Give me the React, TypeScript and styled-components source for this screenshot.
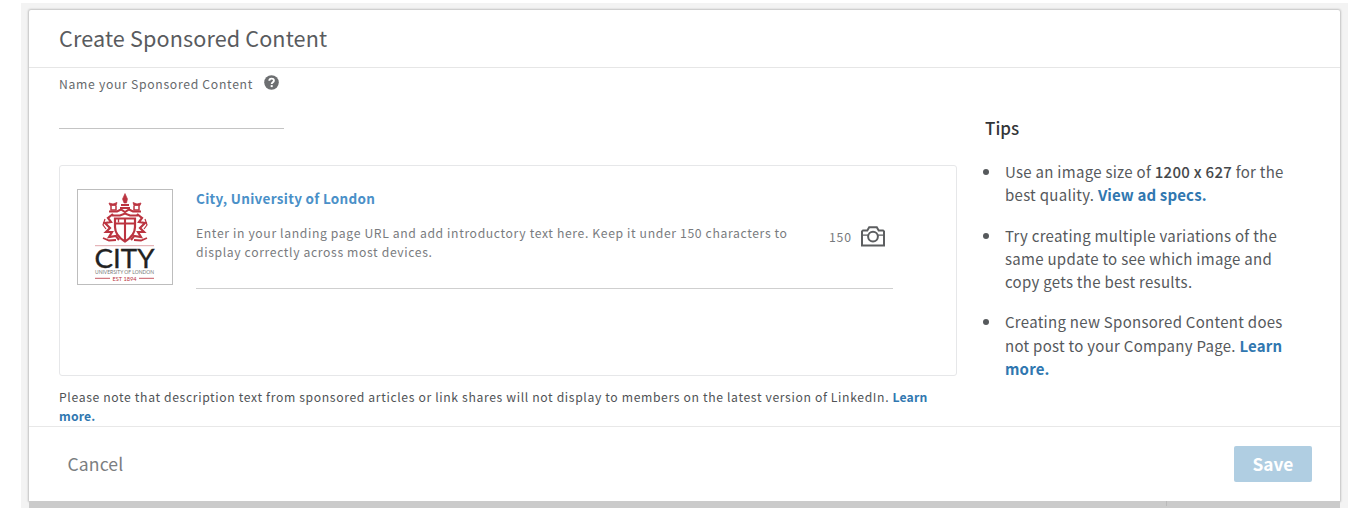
import React from "react";
import styled, { createGlobalStyle } from "styled-components";

const GlobalStyle = createGlobalStyle`
  *, *::before, *::after { box-sizing: border-box; }
  body {
    margin: 0;
    background: #fff;
    font-family: "Noto Sans CJK SC", "Noto Sans", sans-serif;
    color: #5c5f62;
  }
`;

const Backdrop = styled.main`
  width: 1327px;
  height: 505px;
  margin: 3px 0 0 21px;
  padding: 7px 8px 0;
  background: #f3f3f3;
  overflow: hidden;
`;

const Dialog = styled.section`
  display: flex;
  flex-direction: column;
  height: 491px;
  background: #fff;
  border-radius: 2px 2px 0 0;
  box-shadow: 0 0 2px 1px rgba(0, 0, 0, 0.2);
`;

const Header = styled.header`
  height: 58px;
  padding-left: 30px;
  border-bottom: 1px solid #e6e6e6;
`;

const Title = styled.h1`
  margin: 0;
  font-size: 21.6px;
  line-height: 56px;
  font-weight: 400;
  letter-spacing: 0.13px;
  color: #595b5e;
`;

const Body = styled.div`
  display: flex;
  flex: 1;
  min-height: 0;
  padding-left: 30px;
`;

const FormColumn = styled.div`
  width: 898px;
`;

const FieldLabel = styled.label`
  display: flex;
  align-items: center;
  gap: 11px;
  height: 31px;
  font-size: 12.2px;
  letter-spacing: 0.7px;
  color: #66696c;

  svg {
    margin-bottom: 3px;
  }
`;

const NameInput = styled.input`
  display: block;
  width: 225px;
  height: 30px;
  padding: 0;
  border: 0;
  border-bottom: 1px solid #c4c4c4;
  outline: 0;
  background: transparent;
`;

const AdCard = styled.article`
  display: flex;
  align-items: flex-start;
  gap: 23px;
  height: 211px;
  margin-top: 36px;
  padding: 23px 0 0 17px;
  border: 1px solid #e6e7e9;
  border-radius: 3px;
`;

const LogoFrame = styled.div`
  width: 96px;
  height: 96px;
  border: 1px solid #bdbdbd;
`;

const Composer = styled.div`
  width: 697px;
  height: 100px;
  border-bottom: 1px solid #cfcfcf;
`;

const CompanyName = styled.a`
  display: block;
  height: 35px;
  font-size: 13.5px;
  line-height: 18px;
  font-weight: 700;
  letter-spacing: 0.3px;
  color: #4a90c8;
`;

const PromptRow = styled.div`
  display: flex;
`;

const Prompt = styled.p`
  width: 633px;
  margin: 0;
  font-size: 12.2px;
  line-height: 18.67px;
  letter-spacing: 0.63px;
  color: #797b7e;
  white-space: nowrap;
`;

const Counter = styled.span`
  width: 32px;
  padding-top: 4px;
  font-size: 12.2px;
  line-height: 18px;
  letter-spacing: 0.8px;
  color: #76797c;
`;

const CameraSlot = styled.span`
  padding-top: 2px;
  line-height: 0;
`;

const Note = styled.p`
  margin: 12px 0 0;
  font-size: 12.2px;
  line-height: 18.67px;
  letter-spacing: 0.634px;
  color: #505356;
  white-space: nowrap;
`;

const Link = styled.a`
  font-weight: 700;
  letter-spacing: 0.15px;
  color: #3077b0;
`;

const Tips = styled.aside`
  padding: 47px 0 0 28px;
`;

const TipsTitle = styled.h2`
  margin: 0;
  font-size: 17px;
  line-height: 26px;
  font-weight: 500;
  color: #333538;
`;

const TipList = styled.ul`
  margin: 19px 0 0;
  padding: 0;
  list-style: none;
`;

const Tip = styled.li`
  display: flex;
  margin-bottom: 17px;
  font-size: 15px;
  line-height: 23.3px;
  letter-spacing: 0.28px;
  color: #56595c;
  white-space: nowrap;

  &::before {
    content: "";
    width: 6px;
    height: 6px;
    margin: 9px 16px 0 -2px;
    border-radius: 50%;
    background: #56595c;
    flex: none;
  }
`;

const Size = styled.span`
  font-weight: 500;
  color: #45484b;
`;

const Footer = styled.footer`
  display: flex;
  align-items: center;
  justify-content: space-between;
  height: 75px;
  padding: 0 28px 0 38.5px;
  border-top: 1px solid #e8e8e8;
`;

const CancelButton = styled.button`
  padding: 0;
  border: 0;
  background: none;
  font: 400 17.6px/36px "Noto Sans CJK SC", sans-serif;
  letter-spacing: 0.1px;
  color: #7b7e81;
`;

const SaveButton = styled.button`
  width: 78px;
  height: 36px;
  padding: 0;
  border: 0;
  border-radius: 2px;
  background: #b0cee2;
  font: 700 17.3px/36px "Noto Sans CJK SC", sans-serif;
  color: #fff;
`;

const PageStrip = styled.div`
  display: flex;
  justify-content: flex-end;
  height: 7px;
  padding-right: 173px;
  background: #cbcbcb;

  &::after {
    content: "";
    width: 1px;
    height: 5px;
    background: #bababa;
  }
`;

const HelpIcon = () => (
  <svg width="15" height="15" viewBox="0 0 15 15">
    <circle cx="7.5" cy="7.5" r="7.3" fill="#6d6f71" />
    <path d="M5.3 5.8C5.3 2.9 10 2.9 9.9 5.6C9.8 7.2 7.7 7.2 7.7 9.1" fill="none" stroke="#fff" strokeWidth="1.9" />
    <rect x="6.7" y="10.1" width="2" height="2" fill="#fff" />
  </svg>
);

const CameraIcon = () => (
  <svg width="24" height="21" viewBox="0 0 24 21" fill="none" stroke="#5c5e60" strokeWidth="2">
    <path d="M1 19.4V5.4L2 4.4H6.3L8.2 1.2H15.8L17.7 4.4H22L23 5.4V19.4Z" />
    <path d="M1 9.2H7M17 9.2H23" strokeWidth="1.3" />
    <circle cx="12" cy="10.6" r="4.9" />
  </svg>
);

const CityLogo = () => (
  <svg width="94" height="94" viewBox="0 0 94 94">
    <g fill="none" stroke="#bb3440">
      <path d="M47 3.5L44.5 9L46 13H48.5L49.5 9Z" fill="#bb3440" strokeWidth=".6" />
      <path d="M43 15H51M42 18H52" strokeWidth="1.8" />
      <path d="M31 13L35 14L39 12.5L38 15.5H32ZM55 12.5L59 14L63 13L62 15.5H56Z" fill="#bb3440" strokeWidth=".8" />
      <path d="M33 15.5V20H38V15.5M56 15.5V20H61V15.5" strokeWidth="1.5" />
      <path d="M31 21.5H39L43 19.5L47 22L51 19.5L55 21.5H63" strokeWidth="2" />
      <path d="M34 25.5H42L47 23.5L52 25.5H60" strokeWidth="2" />
      <path d="M37 28.5H57V37C57 44 52 48.5 47 51.5C42 48.5 37 44 37 37Z" fill="#fff" strokeWidth="2.2" />
      <path d="M47 28V51M38 33.5H56" strokeWidth="2.1" />
      <path d="M40.5 29V32.5" strokeWidth="1.4" />
      <path d="M35 24L30 28L33 32L27 33L32 38L28 42L34 42L31 47L38 46L41 50" strokeWidth="2.2" />
      <path d="M59 24L64 28L61 32L67 33L62 38L66 42L60 42L63 47L56 46L53 50" strokeWidth="2.2" />
      <path d="M27 29L25 35L28 39M67 29L69 35L66 39" strokeWidth="1.2" />
      <path d="M25 48L31 50.5L38 50M69 48L63 50.5L56 50" strokeWidth="1.8" />
    </g>
    <path d="M17 55.7H76" stroke="#dfa4a9" />
    <text x="16.5" y="77.5" textLength="60" lengthAdjust="spacingAndGlyphs" fontFamily="Lato, sans-serif" fontSize="26.5" fill="#222" stroke="#222" strokeWidth=".3">CITY</text>
    <text x="17" y="84" textLength="59" lengthAdjust="spacingAndGlyphs" fontFamily="Lato, sans-serif" fontSize="5.8" fill="#777">UNIVERSITY OF LONDON</text>
    <path d="M17 88.3H32M61 88.3H76" stroke="#c65963" />
    <text x="34.5" y="90.5" textLength="24" lengthAdjust="spacingAndGlyphs" fontFamily="Lato, sans-serif" fontSize="5.5" fill="#bb3440">EST 1894</text>
  </svg>
);

export default function App() {
  return (
    <>
      <GlobalStyle />
      <Backdrop>
        <Dialog>
          <Header>
            <Title>Create Sponsored Content</Title>
          </Header>
          <Body>
            <FormColumn>
              <FieldLabel htmlFor="content-name">
                Name your Sponsored Content <HelpIcon />
              </FieldLabel>
              <NameInput id="content-name" />
              <AdCard>
                <LogoFrame>
                  <CityLogo />
                </LogoFrame>
                <Composer>
                  <CompanyName>City, University of London</CompanyName>
                  <PromptRow>
                    <Prompt>
                      Enter in your landing page URL and add introductory text here. Keep it under 150 characters to
                      <br />
                      display correctly across most devices.
                    </Prompt>
                    <Counter>150</Counter>
                    <CameraSlot>
                      <CameraIcon />
                    </CameraSlot>
                  </PromptRow>
                </Composer>
              </AdCard>
              <Note>
                Please note that description text from sponsored articles or link shares will not display to members on
                the latest version of LinkedIn. <Link>Learn</Link>
                <br />
                <Link>more.</Link>
              </Note>
            </FormColumn>
            <Tips>
              <TipsTitle>Tips</TipsTitle>
              <TipList>
                <Tip>
                  <div>
                    Use an image size of <Size>1200 x 627</Size> for the
                    <br />
                    best quality. <Link>View ad specs.</Link>
                  </div>
                </Tip>
                <Tip>
                  <div>
                    Try creating multiple variations of the
                    <br />
                    same update to see which image and
                    <br />
                    copy gets the best results.
                  </div>
                </Tip>
                <Tip>
                  <div>
                    Creating new Sponsored Content does
                    <br />
                    not post to your Company Page. <Link>Learn</Link>
                    <br />
                    <Link>more.</Link>
                  </div>
                </Tip>
              </TipList>
            </Tips>
          </Body>
          <Footer>
            <CancelButton>Cancel</CancelButton>
            <SaveButton>Save</SaveButton>
          </Footer>
        </Dialog>
        <PageStrip />
      </Backdrop>
    </>
  );
}
